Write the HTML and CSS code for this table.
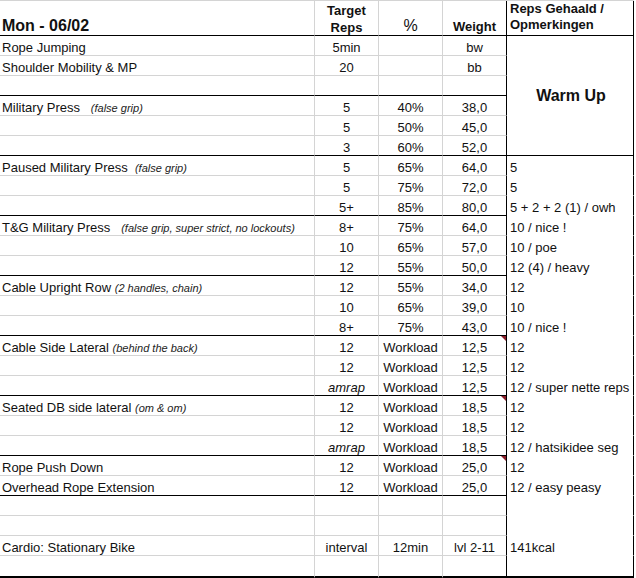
FILE: index.html
```html
<!DOCTYPE html>
<html lang="nl">
<head>
<meta charset="utf-8">
<title>Mon - 06/02</title>
<link rel="stylesheet" href="styles.css">
</head>
<body>
<div class="sheet">
  <div class="c a hd title s">Mon - 06/02</div>
  <div class="c b hd two s">Target<br>Reps</div>
  <div class="c m hd pct s">%</div>
  <div class="c d hd wt s">Weight</div>
  <div class="c e hd top s">Reps Gehaald /<br>Opmerkingen</div>

  <div class="c e warm">Warm Up</div>

  <div class="c a">Rope Jumping</div><div class="c b">5min</div><div class="c m"></div><div class="c d">bw</div>
  <div class="c a">Shoulder Mobility &amp; MP</div><div class="c b">20</div><div class="c m"></div><div class="c d">bb</div>
  <div class="c a s"></div><div class="c b s"></div><div class="c m s"></div><div class="c d s"></div>

  <div class="c a">Military Press   <i class="n">(false grip)</i></div><div class="c b">5</div><div class="c m">40%</div><div class="c d">38,0</div>
  <div class="c a"></div><div class="c b">5</div><div class="c m">50%</div><div class="c d">45,0</div>
  <div class="c a s"></div><div class="c b s">3</div><div class="c m s">60%</div><div class="c d s">52,0</div>

  <div class="c a">Paused Military Press  <i class="n">(false grip)</i></div><div class="c b">5</div><div class="c m">65%</div><div class="c d">64,0</div><div class="c e">5</div>
  <div class="c a"></div><div class="c b">5</div><div class="c m">75%</div><div class="c d">72,0</div><div class="c e">5</div>
  <div class="c a s"></div><div class="c b s">5+</div><div class="c m s">85%</div><div class="c d s">80,0</div><div class="c e">5 + 2 + 2 (1) / owh</div>

  <div class="c a">T&amp;G Military Press   <i class="n">(false grip, super strict, no lockouts)</i></div><div class="c b">8+</div><div class="c m">75%</div><div class="c d">64,0</div><div class="c e">10 / nice !</div>
  <div class="c a"></div><div class="c b">10</div><div class="c m">65%</div><div class="c d">57,0</div><div class="c e">10 / poe</div>
  <div class="c a s"></div><div class="c b s">12</div><div class="c m s">55%</div><div class="c d s">50,0</div><div class="c e">12 (4) / heavy</div>

  <div class="c a">Cable Upright Row <i class="n">(2 handles, chain)</i></div><div class="c b">12</div><div class="c m">55%</div><div class="c d">34,0</div><div class="c e">12</div>
  <div class="c a"></div><div class="c b">10</div><div class="c m">65%</div><div class="c d">39,0</div><div class="c e">10</div>
  <div class="c a s"></div><div class="c b s">8+</div><div class="c m s">75%</div><div class="c d s">43,0</div><div class="c e">10 / nice !</div>

  <div class="c a">Cable Side Lateral <i class="n">(behind the back)</i></div><div class="c b">12</div><div class="c m">Workload</div><div class="c d note">12,5</div><div class="c e">12</div>
  <div class="c a"></div><div class="c b">12</div><div class="c m">Workload</div><div class="c d">12,5</div><div class="c e">12</div>
  <div class="c a s"></div><div class="c b s it">amrap</div><div class="c m s">Workload</div><div class="c d s">12,5</div><div class="c e">12 / super nette reps</div>

  <div class="c a">Seated DB side lateral <i class="n">(om &amp; om)</i></div><div class="c b">12</div><div class="c m">Workload</div><div class="c d note">18,5</div><div class="c e">12</div>
  <div class="c a"></div><div class="c b">12</div><div class="c m">Workload</div><div class="c d">18,5</div><div class="c e">12</div>
  <div class="c a s"></div><div class="c b s it">amrap</div><div class="c m s">Workload</div><div class="c d s">18,5</div><div class="c e">12 / hatsikidee seg</div>

  <div class="c a">Rope Push Down</div><div class="c b">12</div><div class="c m">Workload</div><div class="c d note">25,0</div><div class="c e">12</div>
  <div class="c a s">Overhead Rope Extension</div><div class="c b s">12</div><div class="c m s">Workload</div><div class="c d s">25,0</div><div class="c e">12 / easy peasy</div>

  <div class="c a"></div><div class="c b"></div><div class="c m"></div><div class="c d"></div><div class="c e"></div>
  <div class="c a"></div><div class="c b"></div><div class="c m"></div><div class="c d"></div><div class="c e"></div>
  <div class="c a">Cardio: Stationary Bike</div><div class="c b">interval</div><div class="c m">12min</div><div class="c d">lvl 2-11</div><div class="c e">141kcal</div>
  <div class="c a last"></div><div class="c b last"></div><div class="c m last"></div><div class="c d last"></div><div class="c e last"></div>
</div>
</body>
</html>
```
FILE: styles.css
```css
html, body {
  margin: 0;
  padding: 0;
  background: #ffffff;
}

body {
  font-family: "Liberation Sans", Arial, sans-serif;
  font-size: 13px;
  color: #111111;
}

.sheet {
  display: grid;
  grid-template-columns: 315px 64px 64px 64px 127px;
  grid-template-rows: 35px repeat(26, 20px) 22px;
  width: 634px;
  border-top: 1px solid #d4d4d4;
}

.c {
  box-sizing: border-box;
  border-right: 1px solid #d4d4d4;
  border-bottom: 1px solid #d4d4d4;
  padding-top: 4px;
  line-height: 15px;
  white-space: pre;
  overflow: visible;
  position: relative;
}

.a {
  padding-left: 2px;
  text-align: left;
}

.b, .m, .d {
  text-align: center;
}

.d {
  border-right-color: #000000;
}

.e {
  padding-left: 3px;
  text-align: left;
  border-right-color: #000000;
  border-bottom-color: transparent;
}

.s {
  border-bottom-color: #000000;
}

.last {
  border-bottom: 2px solid #000000;
}

.n {
  font-size: 11px;
  font-style: italic;
  color: #222222;
}

.it {
  font-style: italic;
}

/* header row */
.hd {
  padding-top: 0;
  font-weight: bold;
}

.title {
  font-size: 16px;
  line-height: 18px;
  padding-top: 16px;
}

.two {
  line-height: 17px;
  padding-top: 1px;
}

.pct {
  font-weight: normal;
  font-size: 16px;
  line-height: 18px;
  padding-top: 16px;
}

.wt {
  padding-top: 18px;
  line-height: 15px;
}

.top {
  line-height: 16px;
  padding-top: 0;
  border-bottom-color: #000000;
}

.warm {
  grid-column: 5;
  grid-row: 2 / span 6;
  display: flex;
  align-items: center;
  justify-content: center;
  padding: 0 0 0 2px;
  font-size: 16px;
  font-weight: bold;
  border-bottom-color: #000000;
}

.note::after {
  content: "";
  position: absolute;
  top: 0;
  right: 0;
  border-left: 5px solid transparent;
  border-top: 5px solid #8a1d2a;
}
```
